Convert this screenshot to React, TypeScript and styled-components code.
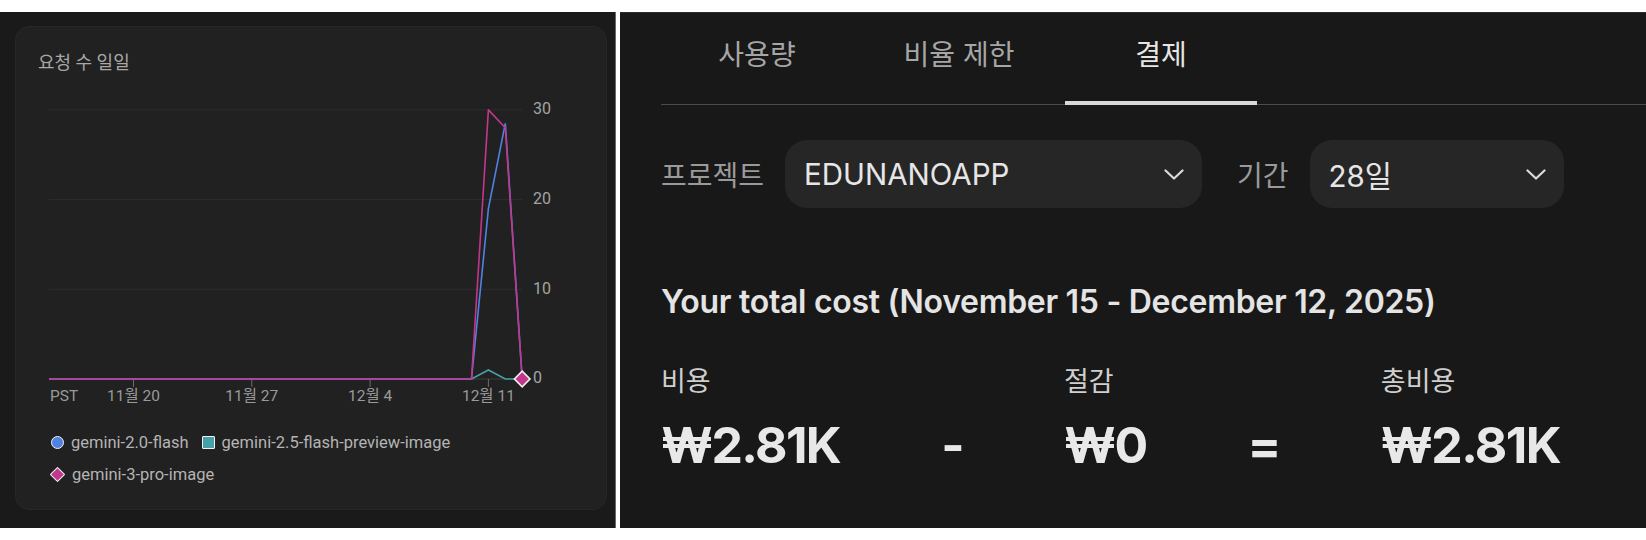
import styled, {createGlobalStyle} from 'styled-components'

const GlobalStyle = createGlobalStyle`
	body {
		margin: 0;
		background: #ffffff;
	}
	* {
		box-sizing: border-box;
	}
`

const Page = styled.div`
	display: flex;
	gap: 4px;
	width: 1646px;
	height: 528px;
	padding-top: 12px;
`

const LeftPanel = styled.div`
	width: 616px;
	background: #1a1a1a;
	border-right: 1px solid #6a6a6a;
	padding: 14px 0 0 15px;
	font-family: Roboto, 'Noto Sans CJK KR', sans-serif;
`

const Card = styled.div`
	width: 592px;
	height: 484px;
	background: #212121;
	border: 1px solid #272727;
	border-radius: 14px;
	padding: 24px 0 0 22px;
`

const CardTitle = styled.div`
	font-size: 18px;
	line-height: 24px;
	color: #a8a8a8;
`

const Chart = styled.svg`
	display: block;
	font-family: Roboto, 'Noto Sans CJK KR', sans-serif;
`

const Legend = styled.div`
	display: flex;
	flex-wrap: wrap;
	column-gap: 13px;
	width: 450px;
	margin-top: 16px;
	padding-left: 13px;
`

const LegendItem = styled.div`
	display: flex;
	align-items: center;
	gap: 7px;
	height: 32px;
	font-size: 16.5px;
	color: #b4b4b4;
`

const LegendMark = styled.span<{$shape: 'circle' | 'square' | 'diamond'; $color: string}>`
	display: inline-block;
	width: ${p => (p.$shape === 'diamond' ? 11 : 13)}px;
	height: ${p => (p.$shape === 'diamond' ? 11 : 13)}px;
	background: ${p => p.$color};
	border: 1.5px solid #f2f2f2;
	border-radius: ${p => (p.$shape === 'circle' ? '50%' : '1px')};
	transform: ${p => (p.$shape === 'diamond' ? 'rotate(45deg)' : 'none')};
	margin: ${p => (p.$shape === 'diamond' ? '0 2px 0 1px' : '0')};
`

const RightPanel = styled.div`
	flex: 1;
	background: #181818;
	border-top: 1px solid #2c2c2c;
	padding-left: 41px;
	font-family: Inter, 'Noto Sans CJK KR', sans-serif;
`

const Tabs = styled.div`
	display: flex;
	gap: 10px;
	height: 92px;
	border-bottom: 1px solid #4c4c4c;
`

const Tab = styled.div<{$active?: boolean}>`
	position: relative;
	width: 192px;
	display: flex;
	align-items: center;
	justify-content: center;
	padding-bottom: 12px;
	font-size: 28px;
	color: ${p => (p.$active ? '#e6e6e6' : '#a6a6a6')};

	&::after {
		content: '';
		display: ${p => (p.$active ? 'block' : 'none')};
		position: absolute;
		left: 0;
		right: 0;
		bottom: -1px;
		height: 4px;
		background: #d8d8d8;
	}
`

const Filters = styled.div`
	display: flex;
	align-items: center;
	gap: 35px;
	margin-top: 35px;
`

const FilterGroup = styled.div`
	display: flex;
	align-items: center;
	gap: 21px;
`

const FilterLabel = styled.span`
	font-size: 28px;
	color: #9a9a9a;
`

const Select = styled.div<{$width: number}>`
	width: ${p => p.$width}px;
	height: 68px;
	display: flex;
	align-items: center;
	justify-content: space-between;
	padding: 0 18px 0 19px;
	background: #262626;
	border-radius: 22px;
	font-size: 29.5px;
	color: #e6e6e6;
`

const Heading = styled.h2`
	margin: 74px 0 0;
	font-size: 32px;
	line-height: 40px;
	font-weight: 600;
	letter-spacing: -0.3px;
	color: #e4e4e4;
`

const Totals = styled.div`
	display: flex;
	align-items: flex-end;
	gap: 101px;
	margin-top: 44px;
`

const Column = styled.div`
	display: flex;
	flex-direction: column;
	gap: 17px;
`

const CostLabel = styled.div`
	font-size: 27px;
	line-height: 32px;
	color: #cfcfcf;
`

const Amount = styled.div`
	font-size: 50px;
	line-height: 60px;
	font-weight: 700;
	letter-spacing: -1.6px;
	color: #e8e8e8;
`

const Chevron = () => (
	<svg width="20" height="11" viewBox="0 0 20 11" fill="none">
		<polyline points="1.5,1.5 10,9.5 18.5,1.5" stroke="#dcdcdc" strokeWidth="2.2" strokeLinecap="round" strokeLinejoin="round" />
	</svg>
)

const xOf = (d: number) => 11 + d * 16.9
const yOf = (v: number) => 304 - v * 8.97

const series = (vals: Record<number, number>) => {
	const pts: string[] = []
	for (let d = 0; d <= 28; d++) pts.push(`${xOf(d).toFixed(1)},${yOf(vals[d] ?? 0).toFixed(1)}`)
	return pts.join(' ')
}

const ticks = [
	{d: 5, label: '11월 20'},
	{d: 12, label: '11월 27'},
	{d: 19, label: '12월 4'},
	{d: 26, label: '12월 11'},
]

const RequestChart = () => {
	const endX = xOf(28)
	const endY = yOf(0)
	return (
		<Chart width={560} height={335}>
			{[0, 10, 20, 30].map(v => (
				<g key={v}>
					<line x1={xOf(0)} x2={endX} y1={yOf(v)} y2={yOf(v)} stroke={v === 0 ? '#3c3c3c' : '#2d2d2d'} strokeWidth={1} />
					<text x={495} y={yOf(v)} dominantBaseline="middle" fontSize={16} fill="#a4a4a4">
						{v}
					</text>
				</g>
			))}
			{ticks.map(t => (
				<line key={t.d} x1={xOf(t.d)} x2={xOf(t.d)} y1={304} y2={312} stroke="#6a6a6a" strokeWidth={1} />
			))}
			<text x={12} y={322} dominantBaseline="middle" fontSize={15.5} fill="#9a9a9a">
				PST
			</text>
			{ticks.map(t => (
				<text key={t.label} x={xOf(t.d)} y={322} textAnchor="middle" dominantBaseline="middle" fontSize={15.5} fill="#9a9a9a">
					{t.label}
				</text>
			))}
			<polyline points={series({26: 1})} fill="none" stroke="#46a0a8" strokeWidth={1.6} />
			<polyline points={series({26: 19, 27: 28.5})} fill="none" stroke="#4f82e3" strokeWidth={1.6} />
			<polyline points={series({26: 30, 27: 28})} fill="none" stroke="#c2378b" strokeWidth={1.6} strokeLinejoin="round" />
			<rect x={endX - 5.5} y={endY - 5.5} width={11} height={11} fill="#c2378b" stroke="#f2f2f2" strokeWidth={1.6} transform={`rotate(45 ${endX} ${endY})`} />
		</Chart>
	)
}

const App = () => {
	return (
		<>
			<GlobalStyle />
			<Page>
				<LeftPanel>
					<Card>
						<CardTitle>요청 수 일일</CardTitle>
						<RequestChart />
						<Legend>
							<LegendItem>
								<LegendMark $shape="circle" $color="#4f82e3" />
								gemini-2.0-flash
							</LegendItem>
							<LegendItem>
								<LegendMark $shape="square" $color="#46a0a8" />
								gemini-2.5-flash-preview-image
							</LegendItem>
							<LegendItem>
								<LegendMark $shape="diamond" $color="#c2378b" />
								gemini-3-pro-image
							</LegendItem>
						</Legend>
					</Card>
				</LeftPanel>

				<RightPanel>
					<Tabs>
						<Tab>사용량</Tab>
						<Tab>비율 제한</Tab>
						<Tab $active>결제</Tab>
					</Tabs>

					<Filters>
						<FilterGroup>
							<FilterLabel>프로젝트</FilterLabel>
							<Select $width={417}>
								EDUNANOAPP
								<Chevron />
							</Select>
						</FilterGroup>
						<FilterGroup>
							<FilterLabel>기간</FilterLabel>
							<Select $width={254}>
								28일
								<Chevron />
							</Select>
						</FilterGroup>
					</Filters>

					<Heading>Your total cost (November 15 - December 12, 2025)</Heading>

					<Totals>
						<Column>
							<CostLabel>비용</CostLabel>
							<Amount>₩2.81K</Amount>
						</Column>
						<Amount>-</Amount>
						<Column>
							<CostLabel>절감</CostLabel>
							<Amount>₩0</Amount>
						</Column>
						<Amount>=</Amount>
						<Column>
							<CostLabel>총비용</CostLabel>
							<Amount>₩2.81K</Amount>
						</Column>
					</Totals>
				</RightPanel>
			</Page>
		</>
	)
}

export default App
